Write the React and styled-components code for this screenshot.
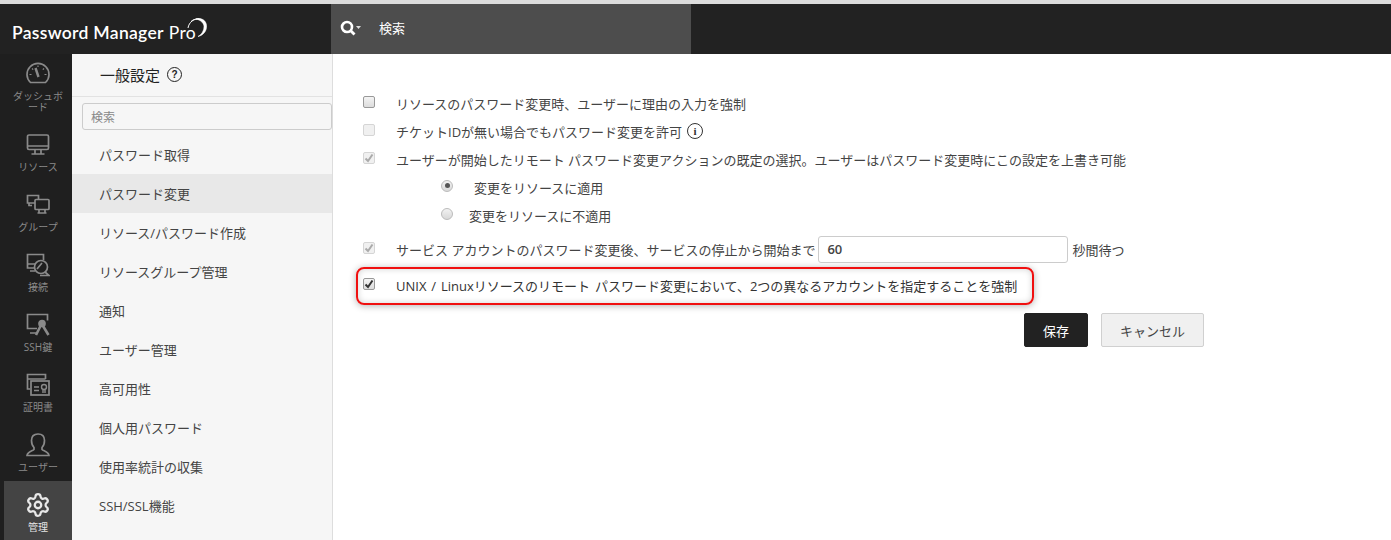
import React from 'react';
import styled, { createGlobalStyle } from 'styled-components';
import { Settings } from 'lucide-react';

const GlobalStyle = createGlobalStyle`
  html, body {
    margin: 0;
    padding: 0;
    height: 100%;
    overflow: hidden;
    background: #fff;
  }
  body {
    font-family: "Open Sans", "Noto Sans CJK JP", sans-serif;
    font-size: 13px;
    color: #333;
  }
  * { box-sizing: border-box; }
`;

const Page = styled.div`
  display: flex;
  flex-direction: column;
  height: 540px;
  overflow: hidden;
  border-top: 4px solid #dcdcdc;
`;

const Header = styled.header`
  display: flex;
  flex: 0 0 50px;
  background: #222;
`;

const Logo = styled.div`
  display: flex;
  align-items: flex-start;
  width: 331px;
  padding: 14px 0 0 12px;
  color: #fff;
  font-family: "Lato", sans-serif;
  font-size: 17.5px;
  font-weight: 600;
  letter-spacing: 0.3px;
  line-height: 30px;
  white-space: nowrap;

  svg { margin: -1px 0 0 -9px; }
`;

const LogoLight = styled.span`
  margin-left: 5px;
  font-weight: 400;
`;

const SearchBar = styled.div`
  display: flex;
  align-items: center;
  gap: 17px;
  width: 360px;
  padding: 0 0 3px 9px;
  background: #4d4d4d;
  color: #fff;
  font-size: 13px;
`;

const Body = styled.div`
  display: flex;
  flex: 1;
  min-height: 0;
`;

const Rail = styled.nav`
  flex: 0 0 72px;
  background: #1f1f1f;
  padding-left: 4px;
`;

const RailItem = styled.div`
  display: flex;
  flex-direction: column;
  align-items: center;
  height: ${p => p.$tall ? 67 : 60}px;
  padding-top: ${p => p.$tall ? 8 : 12}px;
  background: ${p => p.$active ? '#444' : 'transparent'};
  color: ${p => p.$active ? '#e4e4e4' : '#8a8a8a'};

  svg { flex: 0 0 auto; }
`;

const RailLabel = styled.span`
  width: 54px;
  margin-top: 5px;
  font-size: 10px;
  line-height: 11px;
  text-align: center;
  word-break: break-all;
`;

const SubNav = styled.aside`
  flex: 0 0 260px;
  display: flex;
  flex-direction: column;
  margin-right: -1px;
  background: #f6f6f6;
  border-right: 1px solid #ddd;
`;

const SubNavTitle = styled.div`
  display: flex;
  align-items: center;
  gap: 7px;
  height: 43px;
  padding: 0 0 1px 28px;
  border-bottom: 1px solid #e2e2e2;
  color: #222;
  font-size: 15px;
`;

const HelpBadge = styled.span`
  display: inline-flex;
  align-items: center;
  justify-content: center;
  width: 15px;
  height: 15px;
  border: 1.5px solid #222;
  border-radius: 50%;
  color: #222;
  font-family: "Liberation Sans", sans-serif;
  font-size: 10px;
  font-weight: 700;
`;

const SubNavSearch = styled.input`
  display: block;
  flex: 0 0 27px;
  width: 250px;
  margin: 6px 0 5px 10px;
  padding: 2px 8px 0;
  border: 1px solid #ccc;
  border-radius: 3px;
  background: #f6f6f6;
  font: inherit;
  font-size: 12px;
  outline: none;

  &::placeholder { color: #888; opacity: 1; }
`;

const SubNavItem = styled.div`
  display: flex;
  align-items: center;
  flex: 0 0 39px;
  padding-left: 27px;
  background: ${p => p.$active ? '#e8e8e8' : 'transparent'};
  color: #444;
  font-size: 13px;
`;

const Content = styled.main`
  flex: 1;
  padding: 35px 0 0 23px;
`;

const Row = styled.div`
  display: flex;
  align-items: center;
  height: 28px;
  padding-left: 8px;
  color: #444;
  font-size: 13px;
  white-space: nowrap;
`;

const InputRow = styled(Row)`
  height: 34px;
  margin-top: 3px;
`;

const HighlightRow = styled(Row)`
  width: 678px;
  height: 38px;
  margin: 1px 0 0 1px;
  padding: 0 0 2px 5px;
  border: 2px solid #f01010;
  border-radius: 8px;
  box-shadow: 0 1px 7px rgba(0, 0, 0, 0.3), inset 0 0 6px rgba(0, 0, 0, 0.18);
  color: #333;
  word-spacing: 1.5px;
`;

const RadioRow = styled(Row)`
  padding-left: 86px;
`;

const CheckBox = styled.span`
  display: inline-flex;
  align-items: center;
  justify-content: center;
  flex: 0 0 12px;
  width: 12px;
  height: 12px;
  margin-right: 21px;
  margin-top: -3px;
  border: 1px solid ${p => p.$disabled ? '#d5d5d5' : '#999'};
  border-radius: 2px;
  background: ${p => p.$disabled ? '#f0f0f0' : 'linear-gradient(#f4f4f4, #dcdcdc)'};
  color: ${p => p.$disabled ? '#aaa' : '#333'};
`;

const Radio = styled.span`
  display: inline-flex;
  align-items: center;
  justify-content: center;
  flex: 0 0 12px;
  width: 12px;
  height: 12px;
  margin-top: -3px;
  margin-right: ${p => p.$gap}px;
  border: 1px solid #bbb;
  border-radius: 50%;
  background: linear-gradient(#f2f2f2, #d8d8d8);

  &::after {
    content: '';
    display: ${p => p.$on ? 'block' : 'none'};
    width: 5px;
    height: 5px;
    border-radius: 50%;
    background: #555;
  }
`;

const InfoBadge = styled.span`
  display: inline-flex;
  align-items: center;
  justify-content: center;
  width: 16px;
  height: 16px;
  margin-left: 5px;
  border: 1.5px solid #333;
  border-radius: 50%;
  color: #333;
  font-family: "Liberation Serif", serif;
  font-size: 11px;
  font-weight: 700;
`;

const NumberInput = styled.input`
  width: 250px;
  height: 27px;
  margin: 0 4px 0 3px;
  padding: 0 8px;
  border: 1px solid #ccc;
  border-radius: 3px;
  color: #444;
  font: inherit;
  font-weight: 600;
  outline: none;
`;

const Actions = styled.div`
  display: flex;
  justify-content: flex-end;
  gap: 13px;
  width: 849px;
  margin-top: 8px;
`;

const Button = styled.button`
  height: 34px;
  padding: 0;
  width: ${p => p.$primary ? 64 : 103}px;
  border: 1px solid ${p => p.$primary ? '#222' : '#d0d0d0'};
  border-radius: 2px;
  background: ${p => p.$primary ? '#222' : '#f0f0f0'};
  color: ${p => p.$primary ? '#fff' : '#444'};
  font: inherit;
  font-size: 13px;
`;

const stroke = { fill: 'none', stroke: 'currentColor', strokeWidth: 1.7 };

const GaugeIcon = () => (
  <svg width="24" height="24" viewBox="0 0 24 24" {...stroke}>
    <path d="M4.500 20.500a11 11 0 1 1 15 0z" />
    <path d="M9.500 6l3 9" strokeWidth="2.400" />
    <path d="M3.500 12.500h2M18.500 12.500h2M6 6.500l1.200 1.200M18 6.500l-1.200 1.200M12 3.500v1.500" strokeWidth="1.200" />
  </svg>
);

const MonitorIcon = () => (
  <svg width="24" height="24" viewBox="0 0 24 24" {...stroke}>
    <rect x="1.500" y="2" width="21" height="14.500" rx="1.500" />
    <path d="M1.500 13h21M9 17v3.500M15 17v3.500M5.500 21h13" />
  </svg>
);

const GroupIcon = () => (
  <svg width="24" height="24" viewBox="0 0 24 24" {...stroke}>
    <path d="M9 10H1.500V2.500h11V6M3 10v2.500h3" />
    <rect x="9" y="6.500" width="14" height="10" rx="1" />
    <path d="M13 17v2.500M19 17v2.500M11.500 20h9" />
  </svg>
);

const ConnectIcon = () => (
  <svg width="24" height="24" viewBox="0 0 24 24" {...stroke}>
    <path d="M9 15H1.500V1.500h16V7" />
    <path d="M4 18h5M1.500 11h8" strokeWidth="1.500" />
    <circle cx="15" cy="14" r="6.500" />
    <path d="M19 19l4 3.500h-9M11 16l5-6" />
  </svg>
);

const KeyIcon = () => (
  <svg width="24" height="24" viewBox="0 0 24 24" {...stroke}>
    <path d="M11 15.500H1.500V1.500h20v6M4 20h7" />
    <circle cx="16" cy="10.500" r="3" fill="currentColor" />
    <path d="M14.500 13l-4.500 9M17 13l5.500 9" strokeWidth="2.600" />
  </svg>
);

const CertIcon = () => (
  <svg width="24" height="24" viewBox="0 0 24 24" {...stroke}>
    <path d="M4 16H1.500V1.500h18V6M1.500 6h18" />
    <rect x="5" y="8" width="18" height="14" />
    <path d="M8 14h5M8 17.500h5" strokeWidth="1.400" />
    <circle cx="18" cy="14" r="2.500" strokeWidth="1.400" />
    <path d="M17 17v3M19 17v3" strokeWidth="1.400" />
  </svg>
);

const UserIcon = () => (
  <svg width="24" height="24" viewBox="0 0 24 24" {...stroke}>
    <path d="M8 14.500c-2-2-2.500-4.500-2.500-7C5.500 3.500 8 1 12 1s6.500 2.500 6.500 6.500c0 2.500-.5 5-2.500 7v2c1.500 1.500 6.500 2 7 6H1c.5-4 5.500-4.500 7-6z" />
  </svg>
);

const GearIcon = () => <Settings size={26} strokeWidth={2.1} color="#e8e8e8" style={{ margin: '-1px 0' }} />;

const SearchIcon = () => (
  <svg width="22" height="16" viewBox="0 0 22 16">
    <circle cx="7" cy="7" r="5" fill="none" stroke="#fff" strokeWidth="2.600" />
    <path d="M10.500 10.500l4 4" stroke="#fff" strokeWidth="2.800" />
    <path d="M16 6h5l-2.500 3z" fill="#ddd" />
  </svg>
);

const LogoSwirl = () => (
  <svg width="21" height="21" viewBox="0 0 21 21" fill="none" stroke="#fff">
    <path d="M1 11C2 5 7 1.500 12 2" strokeWidth="1" />
    <path d="M4 4.500C8 1 14 1 17 5" strokeWidth="1" />
    <path d="M9 2c5-1.500 10 1 10.500 6.500C20 14 16 18.500 11 19.500c3.500-2 6-5.500 6-10 0-3-3-6.500-8-7.500z" fill="#fff" strokeWidth="0.600" />
  </svg>
);

const Check = () => (
  <svg width="10" height="10" viewBox="0 0 10 10">
    <path d="M1.500 5.500L4 8l4.500-6.500" fill="none" stroke="currentColor" strokeWidth="2" />
  </svg>
);

const railItems = [
  { label: 'ダッシュボード', Icon: GaugeIcon, tall: true },
  { label: 'リソース', Icon: MonitorIcon },
  { label: 'グループ', Icon: GroupIcon },
  { label: '接続', Icon: ConnectIcon },
  { label: 'SSH鍵', Icon: KeyIcon },
  { label: '証明書', Icon: CertIcon },
  { label: 'ユーザー', Icon: UserIcon },
  { label: '管理', Icon: GearIcon, active: true },
];

const subNavItems = [
  'パスワード取得',
  'パスワード変更',
  'リソース/パスワード作成',
  'リソースグループ管理',
  '通知',
  'ユーザー管理',
  '高可用性',
  '個人用パスワード',
  '使用率統計の収集',
  'SSH/SSL機能',
];

const App = () => (
  <>
    <GlobalStyle />
    <Page>
      <Header>
        <Logo>
          Password Manager
          <LogoLight>Pro</LogoLight>
          <LogoSwirl />
        </Logo>
        <SearchBar>
          <SearchIcon />
          検索
        </SearchBar>
      </Header>
      <Body>
        <Rail>
          {railItems.map(({ label, Icon, active, tall }) => (
            <RailItem key={label} $active={active} $tall={tall}>
              <Icon />
              <RailLabel>{label}</RailLabel>
            </RailItem>
          ))}
        </Rail>
        <SubNav>
          <SubNavTitle>
            一般設定
            <HelpBadge>?</HelpBadge>
          </SubNavTitle>
          <SubNavSearch placeholder="検索" readOnly />
          {subNavItems.map(item => (
            <SubNavItem key={item} $active={item === 'パスワード変更'}>{item}</SubNavItem>
          ))}
        </SubNav>
        <Content>
          <Row>
            <CheckBox />
            リソースのパスワード変更時、ユーザーに理由の入力を強制
          </Row>
          <Row>
            <CheckBox $disabled />
            チケットIDが無い場合でもパスワード変更を許可
            <InfoBadge>i</InfoBadge>
          </Row>
          <Row>
            <CheckBox $disabled><Check /></CheckBox>
            ユーザーが開始したリモート パスワード変更アクションの既定の選択。ユーザーはパスワード変更時にこの設定を上書き可能
          </Row>
          <RadioRow>
            <Radio $on $gap={21} />
            変更をリソースに適用
          </RadioRow>
          <RadioRow>
            <Radio $gap={16} />
            変更をリソースに不適用
          </RadioRow>
          <InputRow>
            <CheckBox $disabled><Check /></CheckBox>
            サービス アカウントのパスワード変更後、サービスの停止から開始まで
            <NumberInput defaultValue="60" />
            秒間待つ
          </InputRow>
          <HighlightRow>
            <CheckBox><Check /></CheckBox>
            UNIX / Linuxリソースのリモート パスワード変更において、2つの異なるアカウントを指定することを強制
          </HighlightRow>
          <Actions>
            <Button $primary>保存</Button>
            <Button>キャンセル</Button>
          </Actions>
        </Content>
      </Body>
    </Page>
  </>
);

export default App;
